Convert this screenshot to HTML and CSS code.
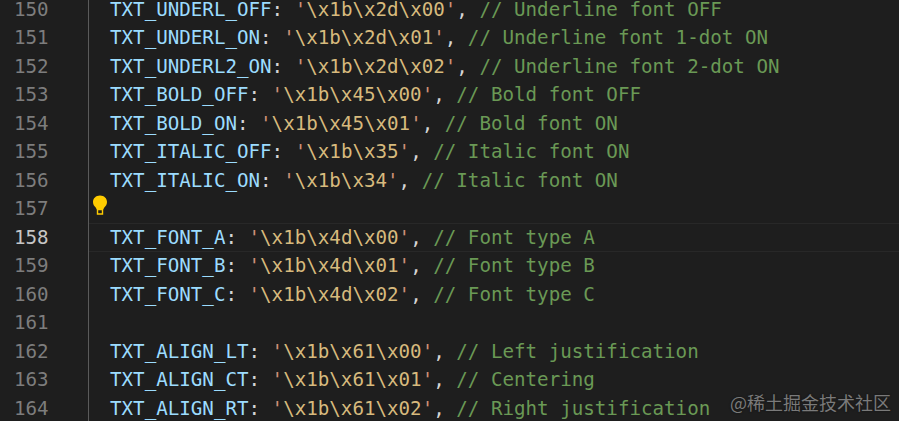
FILE: index.html
```html
<!DOCTYPE html>
<html lang="en">
<head>
<meta charset="utf-8">
<title>Editor</title>
<link rel="stylesheet" href="styles.css">
</head>
<body>
<main class="editor">
<div class="line"><span class="num">150</span><span class="code"><span class="k">TXT_UNDERL_OFF</span><span class="p">:</span> <span class="s">'</span><span class="e">\x1b\x2d\x00</span><span class="s">'</span><span class="p">,</span> <span class="c">// Underline font OFF</span></span></div>
<div class="line"><span class="num">151</span><span class="code"><span class="k">TXT_UNDERL_ON</span><span class="p">:</span> <span class="s">'</span><span class="e">\x1b\x2d\x01</span><span class="s">'</span><span class="p">,</span> <span class="c">// Underline font 1-dot ON</span></span></div>
<div class="line"><span class="num">152</span><span class="code"><span class="k">TXT_UNDERL2_ON</span><span class="p">:</span> <span class="s">'</span><span class="e">\x1b\x2d\x02</span><span class="s">'</span><span class="p">,</span> <span class="c">// Underline font 2-dot ON</span></span></div>
<div class="line"><span class="num">153</span><span class="code"><span class="k">TXT_BOLD_OFF</span><span class="p">:</span> <span class="s">'</span><span class="e">\x1b\x45\x00</span><span class="s">'</span><span class="p">,</span> <span class="c">// Bold font OFF</span></span></div>
<div class="line"><span class="num">154</span><span class="code"><span class="k">TXT_BOLD_ON</span><span class="p">:</span> <span class="s">'</span><span class="e">\x1b\x45\x01</span><span class="s">'</span><span class="p">,</span> <span class="c">// Bold font ON</span></span></div>
<div class="line"><span class="num">155</span><span class="code"><span class="k">TXT_ITALIC_OFF</span><span class="p">:</span> <span class="s">'</span><span class="e">\x1b\x35</span><span class="s">'</span><span class="p">,</span> <span class="c">// Italic font ON</span></span></div>
<div class="line"><span class="num">156</span><span class="code"><span class="k">TXT_ITALIC_ON</span><span class="p">:</span> <span class="s">'</span><span class="e">\x1b\x34</span><span class="s">'</span><span class="p">,</span> <span class="c">// Italic font ON</span></span></div>
<div class="line"><span class="num">157</span><span class="code"></span>
<svg class="bulb" viewBox="0 0 16 20" width="16" height="20" aria-hidden="true"><path d="M8 .5C3.900.5 1 3.400 1 7c0 2.600 1.300 4 2.500 5.300.5.600.9 1.200 1 1.900h7c.1-.7.5-1.300 1-1.900C13.700 11 15 9.600 15 7 15 3.400 12.100.5 8 .5Z" fill="#ffcc00"/><path d="M5.500 14.500h5V19h-5Z" fill="#1e1e1e" stroke="#ffcc00" stroke-width="1.400"/></svg></div>
<div class="line current"><span class="num">158</span><span class="code"><span class="k">TXT_FONT_A</span><span class="p">:</span> <span class="s">'</span><span class="e">\x1b\x4d\x00</span><span class="s">'</span><span class="p">,</span> <span class="c">// Font type A</span></span></div>
<div class="line"><span class="num">159</span><span class="code"><span class="k">TXT_FONT_B</span><span class="p">:</span> <span class="s">'</span><span class="e">\x1b\x4d\x01</span><span class="s">'</span><span class="p">,</span> <span class="c">// Font type B</span></span></div>
<div class="line"><span class="num">160</span><span class="code"><span class="k">TXT_FONT_C</span><span class="p">:</span> <span class="s">'</span><span class="e">\x1b\x4d\x02</span><span class="s">'</span><span class="p">,</span> <span class="c">// Font type C</span></span></div>
<div class="line"><span class="num">161</span><span class="code"></span></div>
<div class="line"><span class="num">162</span><span class="code"><span class="k">TXT_ALIGN_LT</span><span class="p">:</span> <span class="s">'</span><span class="e">\x1b\x61\x00</span><span class="s">'</span><span class="p">,</span> <span class="c">// Left justification</span></span></div>
<div class="line"><span class="num">163</span><span class="code"><span class="k">TXT_ALIGN_CT</span><span class="p">:</span> <span class="s">'</span><span class="e">\x1b\x61\x01</span><span class="s">'</span><span class="p">,</span> <span class="c">// Centering</span></span></div>
<div class="line"><span class="num">164</span><span class="code"><span class="k">TXT_ALIGN_RT</span><span class="p">:</span> <span class="s">'</span><span class="e">\x1b\x61\x02</span><span class="s">'</span><span class="p">,</span> <span class="c">// Right justification</span></span></div>
</main>
<div class="watermark">@稀土掘金技术社区</div>
</body>
</html>
```

FILE: styles.css
```css
html, body {
  margin: 0;
  height: 100%;
  background: #1e1e1e;
  overflow: hidden;
}
.editor {
  margin-top: -5px;
  font-family: "DejaVu Sans Mono", monospace;
  font-size: 19.18px;
  color: #d4d4d4;
}
.line {
  position: relative;
  display: flex;
  height: 28.5px;
  line-height: 20px;
  white-space: pre;
}
.num {
  width: 47px;
  margin-left: 14px;
  padding-top: 4.75px;
  flex: none;
  color: #7d7d7d;
}
.code {
  flex: 1;
  margin-left: 27px;
  padding-top: 4.75px;
  padding-left: 21px;
  border-left: 1px solid #5a5a5a;
}
.current .num {
  color: #c6c6c6;
}
.current .code {
  box-shadow: inset 0 1px 0 #282828, inset 0 -1px 0 #282828;
}
.k { color: #9cdcfe; }
.p { color: #d4d4d4; }
.s { color: #ce9178; }
.e { color: #d7ba7d; }
.c { color: #6a9955; }
.bulb {
  position: absolute;
  left: 92px;
  top: 0;
}
.watermark {
  position: absolute;
  right: 8px;
  bottom: 7px;
  font-family: "Noto Sans CJK SC", sans-serif;
  font-size: 18px;
  line-height: 24px;
  color: #7a7a7a;
  text-shadow: 0 0 2px #111;
}
```
